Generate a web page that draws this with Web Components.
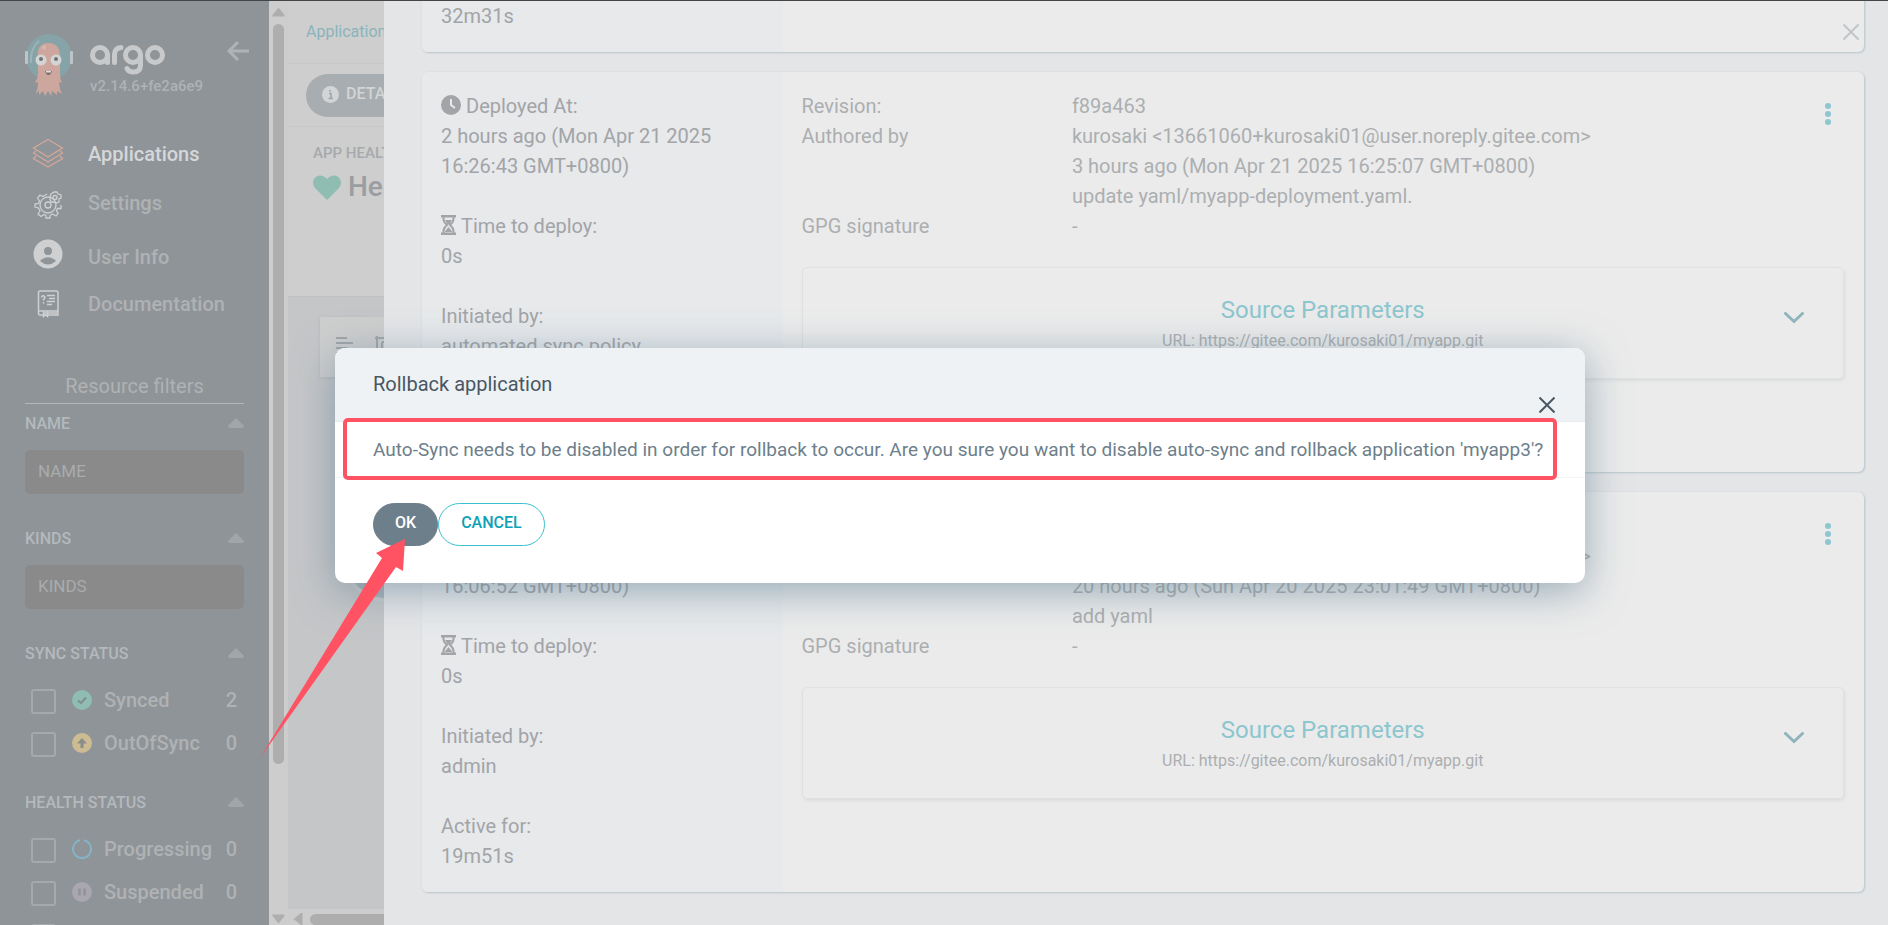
<!DOCTYPE html>
<html lang="en">
<head>
<meta charset="utf-8">
<title>Argo CD - Rollback application</title>
<style>
html, body { margin: 0; height: 100%; overflow: hidden; }
body { font-family: Roboto, "Liberation Sans", sans-serif; font-size: 20px; line-height: 30px; background: #c5c6c8; }
</style>
</head>
<body>
<argo-app></argo-app>

<template id="t-argo-app">
<style>
:host { display: flex; height: 100vh; box-sizing: border-box; border-top: 1px solid #444548; position: relative; overflow: hidden; }
argo-sidebar { flex: 0 0 269px; }
argo-scrollbar { flex: 0 0 19px; }
argo-page { flex: 0 0 96px; }
argo-panel { flex: 1; min-width: 0; }
argo-modal { position: absolute; left: 335px; right: 303px; top: 347px; }
.arrow { position: absolute; left: 255px; top: 534px; }
</style>
<argo-sidebar></argo-sidebar>
<argo-scrollbar></argo-scrollbar>
<argo-page></argo-page>
<argo-panel></argo-panel>
<argo-modal></argo-modal>
<svg class="arrow" width="160" height="228" viewBox="255 535 160 228" aria-hidden="true"><path d="M405 539L376 553L382 558L260 758L396 567L403 571Z" fill="#ff5363"/></svg>
</template>

<template id="t-argo-sidebar">
<style>
:host { display: block; background: #8f9498; color: #afb2b4; padding: 32px 25px 0; box-sizing: border-box; overflow: hidden; }
header { display: flex; height: 64px; }
.logo { flex: 0 0 49px; }
.brand { flex: 1; padding: 12px 0 0 16px; }
.brand svg { display: block; }
.version { font-size: 15px; line-height: 20px; font-weight: 500; }
button { background: none; border: 0; padding: 0; height: 36px; margin-right: -6px; }
nav { padding: 32px 0 0 7px; display: flex; flex-direction: column; }
nav a { display: flex; align-items: center; gap: 24px; height: 48px; color: inherit; text-decoration: none; font-size: 20px; font-weight: 500; }
nav a svg { flex: 0 0 32px; }
nav a.on { color: #d6d7d8; height: 50px; }
nav a.user { height: 56px; }
nav a.doc { height: 42px; }
nav a.user span { padding-top: 4px; }
h2 { margin: 44px 0 0; font-size: 20px; font-weight: 400; line-height: 34px; border-bottom: 1px solid #b3b7b9; text-align: center; }
</style>
<header>
<svg class="logo" width="49" height="64" viewBox="25 33 49 64" aria-hidden="true">
<circle cx="49" cy="57" r="23" fill="#86a3a8"/><path d="M31 63Q30 48 39 41" fill="none" stroke="#9db3b7" stroke-width="2"/>
<rect x="25" y="51" width="3" height="13" rx="1" fill="#bfc4ca"/><rect x="70" y="51" width="3" height="13" rx="1" fill="#bfc4ca"/>
<path d="M37.500 55Q38 43 48.500 43T60 55V73Q60 79 62 83L59 82Q60 91 62 94L57 91V95L52 91L51 96L48 91L45 96L43 91L39 95V91L35 94Q38 90 38 82L35 83Q38 78 38 73Z" fill="#cda79d"/>
<circle cx="44" cy="47.500" r="2" fill="#d9b9ae"/><circle cx="41" cy="60" r="5.500" fill="#d4d4d4"/><circle cx="56" cy="60" r="5.500" fill="#d4d4d4"/>
<circle cx="41" cy="59" r="2" fill="#6d7377"/><circle cx="56" cy="59" r="2" fill="#6d7377"/><path d="M45 71H52Q51 75 48.500 75T45 71Z" fill="#7d6e6e"/><path d="M46 71H51V72.500H46Z" fill="#ddd"/>
</svg>
<div class="brand">
<svg width="76" height="31" viewBox="90 45 76 31" role="img" aria-label="argo"><g fill="none" stroke="#c8c9ca" stroke-width="5" stroke-linecap="round"><circle cx="100" cy="55" r="7.500"/><path d="M107.500 55V62.500M114.500 62.500V54Q115 48 121 47.500"/><circle cx="133" cy="55" r="7.500"/><path d="M140.500 55V66Q140 72 133.500 72Q128.500 72 127 68.500"/><circle cx="155" cy="55" r="7.500"/></g></svg>
<div class="version">v2.14.6+fe2a6e9</div>
</div>
<button aria-label="Collapse sidebar"><svg width="24" height="36" viewBox="226 33 24 36"><path d="M249 51H229M238 42L229 51L238 60" fill="none" stroke="#b0b3b5" stroke-width="3"/></svg></button>
</header>
<nav>
<a class="on" href="#apps"><svg width="32" height="32" viewBox="32 138 32 32" fill="none" stroke="#d3a799" stroke-width="1.300"><path d="M48 139.500L62.500 148L48 157L33.500 148ZM36 151L33.500 153L48 162L62.500 153L60 151M36 156L33.500 158.500L48 167L62.500 158.500L60 156"/></svg><span>Applications</span></a>
<a href="#settings"><svg width="32" height="32" viewBox="0 0 32 32" fill="none" stroke="#cfd0d1" stroke-width="1.300"><circle cx="16" cy="18" r="8"/><circle cx="16" cy="18" r="3"/><path d="M15 7L11 9.500L8 8L5.500 11L7.500 14L6.500 16.500L3 17V20L6.500 21L8 24L6 27L9 29.500L12 27.500L14 28.500V31H18V28.500L20.500 27L24 29L26 26.500L24.500 23.500L25.500 21.500H29V18"/><circle cx="23" cy="10.500" r="2"/><path d="M22 5H25L26 7L29 8V11L27 12L27 15L24 16L22 15L19 15L18 12V10L19 7Z"/></svg><span>Settings</span></a>
<a class="user" href="#user"><svg width="32" height="32" viewBox="0 0 32 32"><circle cx="16" cy="15" r="14.500" fill="#cfd0d1"/><circle cx="16" cy="12" r="4" fill="#8f9498"/><path d="M8 22Q16 14.500 24 22Q16 29 8 22Z" fill="#8f9498"/></svg><span>User Info</span></a>
<a class="doc" href="#docs"><svg width="32" height="32" viewBox="0 0 32 32" fill="none" stroke="#cfd0d1" stroke-width="1.500"><path d="M8 3H24.500Q26 3 26 5V27H8Q6.500 27 6.500 25V5Q6.500 3 8 3ZM7 23H26M11 25H25M15 7.500H23M17 10.500H23M15 13.500H23M15 16.500H20M11.500 23V28.500L13.500 27L15.500 28.500V23"/><path d="M9.500 9.500Q10 7 12 8T11.500 11.500V12.500M11.500 14V15.500"/></svg><span>Documentation</span></a>
</nav>
<h2>Resource filters</h2>
<argo-filter name="NAME" kind="text"></argo-filter>
<argo-filter name="KINDS" kind="text"></argo-filter>
<argo-filter name="SYNC STATUS">
<argo-check label="Synced" count="2" icon="synced"></argo-check>
<argo-check label="OutOfSync" count="0" icon="out"></argo-check>
</argo-filter>
<argo-filter name="HEALTH STATUS">
<argo-check label="Progressing" count="0" icon="progress"></argo-check>
<argo-check label="Suspended" count="0" icon="suspended"></argo-check>
<argo-check label="Healthy" count="2" icon="healthy"></argo-check>
</argo-filter>
</template>

<template id="t-argo-filter">
<style>
:host { display: block; }
.head { display: flex; justify-content: space-between; align-items: center; height: 40px; font-size: 16px; font-weight: 500; }
.head span { color: #b3b9bc; }
.head svg { margin-bottom: 2px; }
input { display: block; width: 100%; height: 44px; box-sizing: border-box; border: 0; border-radius: 5px; background: #8a8a8a; padding: 0 13px 3px; font: 400 17px/40px Roboto, sans-serif; margin: 6px 0 25px; }
input::placeholder { color: #a9acae; opacity: 1; }
.items { padding: 4px 0 19px 6px; }
</style>
<div class="head"><span></span><svg width="16" height="10" viewBox="0 0 16 10" aria-hidden="true"><path d="M8 0L16 8Q16 10 14 10H2Q0 10 0 8Z" fill="#a2a6a8"/></svg></div>
<div class="body"></div>
</template>

<template id="t-argo-check">
<style>
:host { display: block; height: 43px; }
label { display: flex; align-items: center; height: 43px; font-size: 20px; font-weight: 500; }
input { appearance: none; width: 25px; height: 25px; border: 2px solid #a5a9ab; border-radius: 3px; margin: 4px 16px 0 0; flex: none; box-sizing: border-box; }
svg { flex: none; margin-right: 12px; }
.n { flex: 1; }
.c { margin-right: 7px; }
</style>
<label><input type="checkbox"><svg width="20" height="20" viewBox="0 0 20 20" aria-hidden="true"></svg><span class="n"></span><span class="c"></span></label>
</template>

<template id="t-argo-scrollbar">
<style>
:host { display: flex; flex-direction: column; align-items: center; background: #cdcdcd; padding: 6px 0 1px; box-sizing: border-box; }
.thumb { width: 11px; flex: 0 1 740px; border-radius: 6px; background: #aeaeae; margin-top: 7px; }
.gap { flex: 1; }
svg { flex: none; }
</style>
<svg width="13" height="10" viewBox="0 0 13 10"><path d="M6.500 0.500L12.500 8V9.500H0.500V8Z" fill="#aeaeae"/></svg>
<div class="thumb"></div><div class="gap"></div>
<svg width="13" height="10" viewBox="0 0 13 10"><path d="M6.500 9.500L12.500 2V0.500H0.500V2Z" fill="#aeaeae"/></svg>
</template>

<template id="t-argo-page">
<style>
:host { display: flex; flex-direction: column; background: #cecece; overflow: hidden; white-space: nowrap; }
svg { flex: none; }
.crumb { height: 63px; border-bottom: 1px solid #c7c8c9; box-sizing: border-box; padding: 15px 0 0 18px; font-size: 16px; line-height: 32px; flex: none; }
.crumb a { color: #8ab4bb; text-decoration: none; }
.actions { height: 63px; border-bottom: 1px solid #c7c8c9; box-sizing: border-box; padding: 10px 0 0 18px; flex: none; }
.actions button { display: flex; align-items: center; gap: 7px; height: 43px; width: 130px; border: 0; border-radius: 22px; background: #a7adb0; color: #d3d4d5; font: 500 16px/40px Roboto, sans-serif; padding: 0 0 3px 16px; }
.status { height: 169px; padding: 14px 0 0 25px; flex: none; box-sizing: border-box; color: #a6a9ab; }
.status .t { font-size: 15px; font-weight: 500; line-height: 24px; }
.status .v { display: flex; align-items: center; gap: 7px; font-size: 28px; font-weight: 500; line-height: 44px; color: #9a9ea2; }
.canvas { flex: 1; background: #c5c6c8; border-top: 1px solid #bfc1c2; padding: 20px 0 0 32px; position: relative; }
.tools { width: 90px; height: 60px; background: #cecece; padding: 19px 0 0 16px; box-sizing: border-box; box-shadow: 0 1px 3px #b5b8ba; }
.node { position: absolute; left: 54px; top: 217px; width: 88px; height: 88px; border-radius: 50%; background: #a9b3b9; border: 4px solid #cccdce; box-sizing: border-box; }
.hbar { flex: 0 0 16px; background: #cdcdcd; display: flex; align-items: center; gap: 7px; padding: 4px 0 0 5px; height: 16px; box-sizing: border-box; }
.hbar i { width: 200px; flex: none; height: 11px; border-radius: 6px 0 0 6px; background: #aeaeae; }
</style>
<div class="crumb"><a href="#apps">Applications</a></div>
<div class="actions"><button><svg width="17" height="17" viewBox="0 0 17 17"><circle cx="8.500" cy="8.500" r="8.500" fill="#d3d4d5"/><path d="M7 7.500H9V12M6.500 12.500H11M8 4V5.800" stroke="#a0a6a9" stroke-width="1.600" fill="none"/></svg>DETAILS</button></div>
<div class="status"><div class="t">APP HEALTH</div><div class="v"><svg width="28" height="25" viewBox="0 0 28 25"><path d="M14 25L2 13Q-1 9 0.500 5Q2.500 0.500 7 0.500Q11 0.500 14 4Q17 0.500 21 0.500Q25.500 0.500 27.500 5Q29 9 26 13Z" fill="#8fbdb1"/></svg>Healthy</div></div>
<div class="canvas"><div class="tools"><svg width="64" height="30" viewBox="0 0 64 30" fill="none" stroke="#a0a6aa" stroke-width="2"><path d="M0 2H11M0 7H17M0 12H11M0 17H17M41 0V30M39 2H64M46 6H64M46 6V26"/></svg></div><div class="node"></div></div>
<div class="hbar"><svg width="10" height="12" viewBox="0 0 10 12"><path d="M0.500 6L8 0H9.500V12H8Z" fill="#aeaeae"/></svg><i></i></div>
</template>

<template id="t-argo-panel">
<style>
:host { display: flex; flex-direction: column; gap: 20px; background: #e4e5e7; padding: 0 24px 0 38px; position: relative; overflow: hidden; }
argo-deploy { flex: none; }
argo-deploy:first-of-type { margin-top: -349px; }
.close { position: absolute; right: 29px; top: 23px; width: 16px; height: 16px; border: 0; background: none; padding: 0; }
.close svg { display: block; }
</style>
<argo-deploy at="3 hours ago (Mon Apr 21 2025|15:54:12 GMT+0800)" by="automated sync policy" active="32m31s" rev="f89a463" when="3 hours ago (Mon Apr 21 2025 15:50:07 GMT+0800)" msg="update yaml/myapp-deployment.yaml."></argo-deploy>
<argo-deploy at="2 hours ago (Mon Apr 21 2025|16:26:43 GMT+0800)" by="automated sync policy" active="2h10m" rev="f89a463" when="3 hours ago (Mon Apr 21 2025 16:25:07 GMT+0800)" msg="update yaml/myapp-deployment.yaml."></argo-deploy>
<argo-deploy at="3 hours ago (Mon Apr 21 2025|16:06:52 GMT+0800)" by="admin" active="19m51s" rev="f89a463" when="20 hours ago (Sun Apr 20 2025 23:01:49 GMT+0800)" msg="add yaml"></argo-deploy>
<button class="close" aria-label="Close panel"><svg width="16" height="16" viewBox="0 0 16 16"><path d="M0.500 0.500L15.500 15.500M15.500 0.500L0.500 15.500" stroke="#c0c6ca" stroke-width="2"/></svg></button>
</template>

<template id="t-argo-deploy">
<style>
:host { display: grid; grid-template-columns: 1fr 3fr; height: 400px; border-radius: 6px; background: #ebebeb; box-shadow: 1px 1px 2px #b9c6cc, 0 0 2px #d3d9dc; overflow: hidden; position: relative; }
.left { background: #e7e9eb; color: #a2a4a8; padding: 19px; }
.left p { margin: 0 0 30px; }
.left svg { vertical-align: -2px; margin-right: 5px; }
.right { color: #abafb1; padding-top: 19px; }
.row { display: grid; grid-template-columns: 1fr 3fr; }
.row > span { padding-left: 19px; }
.src { margin: 26px 20px 0 19px; height: 112px; box-sizing: border-box; border: 1px solid #dfe0e0; border-radius: 5px; box-shadow: 1px 2px 3px #dcdddd; text-align: center; padding-top: 26px; position: relative; }
.src h3 { margin: 0; font-size: 24px; font-weight: 400; line-height: 32px; color: #8cc6ce; }
.src div { font-size: 16px; line-height: 30px; }
.src button, .kebab { position: absolute; border: 0; background: none; padding: 0; display: block; }
.src button { right: 39px; top: 44px; }
.kebab { right: 33px; top: 31px; }
button svg { display: block; }
</style>
<div class="left">
<p><svg width="20" height="20" viewBox="0 0 20 20"><circle cx="10" cy="10" r="10" fill="#a2a4a8"/><path d="M10 4V10L14 13" stroke="#e7e9eb" stroke-width="2" fill="none"/></svg>Deployed At:<br><span class="at1"></span><br><span class="at2"></span></p>
<p><svg width="15" height="20" viewBox="0 0 15 20"><path d="M0 0H15V2.500H0ZM0 17.500H15V20H0Z" fill="#a2a4a8"/><path d="M2.500 1V4Q2.500 7 6 10Q2.500 13 2.500 16V19M12.500 1V4Q12.500 7 9 10Q12.500 13 12.500 16V19" fill="none" stroke="#a2a4a8" stroke-width="2"/><path d="M4 5H11L8.500 9.500H6.500ZM3.500 17L7.500 12L11.500 17Z" fill="#a2a4a8"/></svg>Time to deploy:<br>0s</p>
<p>Initiated by:<br><span class="by"></span></p>
<p>Active for:<br><span class="active"></span></p>
</div>
<div class="right">
<div class="row"><span>Revision:</span><span class="rev"></span></div>
<div class="row"><span>Authored by</span><span>kurosaki &lt;13661060+kurosaki01@user.noreply.gitee.com&gt;<br><span class="when"></span><br><span class="msg"></span></span></div>
<div class="row"><span>GPG signature</span><span>-</span></div>
<div class="src"><h3>Source Parameters</h3><div>URL: https://gitee.com/kurosaki01/myapp.git</div>
<button aria-label="Expand"><svg width="20" height="12" viewBox="0 0 20 12"><path d="M1.500 1.500L10 9.500L18.500 1.500" fill="none" stroke="#8fb4be" stroke-width="3" stroke-linecap="round"/></svg></button></div>
</div>
<button class="kebab" aria-label="Actions"><svg width="6" height="22" viewBox="0 0 6 22" fill="#8cc6ce"><circle cx="3" cy="3" r="3"/><circle cx="3" cy="11" r="3"/><circle cx="3" cy="19" r="3"/></svg></button>
</template>

<template id="t-argo-modal">
<style>
:host { display: block; background: #fff; border-radius: 10px; box-shadow: 0 8px 40px rgba(96, 128, 146, .6); }
header { height: 74px; border-bottom: 1px solid #e9eced; box-sizing: border-box; background: #eef2f5; border-radius: 10px 10px 0 0; position: relative; padding: 21px 38px 0; }
h1 { margin: 0; font-size: 20px; line-height: 30px; font-weight: 400; color: #495763; }
header button { position: absolute; right: 30px; top: 49px; border: 0; background: none; padding: 0; }
header svg { display: block; }
.msg { padding: 0 38px; height: 56px; font-size: 19px; line-height: 56px; box-sizing: border-box; border-bottom: 1px solid #f3f4f5; color: #6d7f8b; position: relative; white-space: nowrap; }
.mark { position: absolute; left: 8px; right: 28px; top: -4px; bottom: -3px; border: 4px solid #ff5363; border-radius: 5px; box-sizing: border-box; }
footer { display: flex; padding: 25px 38px 37px; }
footer button { height: 43px; border: 1px solid #6d7f8b; border-radius: 22px; background: #6d7f8b; color: #fff; font: 500 16px/38px Roboto, sans-serif; padding: 0 21px 3px; }
footer button.alt { background: #fff; border-color: #3cc0cf; color: #0da2b6; padding: 0 22px 3px; }
</style>
<header><h1>Rollback application</h1><button aria-label="Close"><svg width="16" height="16" viewBox="0 0 16 16"><path d="M0.500 0.500L15.500 15.500M15.500 0.500L0.500 15.500" stroke="#495763" stroke-width="2"/></svg></button></header>
<div class="msg">Auto-Sync needs to be disabled in order for rollback to occur. Are you sure you want to disable auto-sync and rollback application 'myapp3'?<div class="mark"></div></div>
<footer><button>OK</button><button class="alt">CANCEL</button></footer>
</template>

<script>
class Base extends HTMLElement {
  constructor() {
    super();
    this.attachShadow({ mode: 'open' }).append(document.getElementById('t-' + this.localName).content.cloneNode(true));
  }
  $(s) { return this.shadowRoot.querySelector(s); }
}
for (const n of ['app', 'sidebar', 'scrollbar', 'page', 'panel', 'modal']) customElements.define('argo-' + n, class extends Base {});

customElements.define('argo-filter', class extends Base {
  connectedCallback() {
    const name = this.getAttribute('name');
    this.$('.head span').textContent = name;
    const body = this.$('.body');
    body.replaceChildren();
    if (this.getAttribute('kind') === 'text') {
      const i = document.createElement('input');
      i.placeholder = name;
      i.setAttribute('aria-label', name);
      body.append(i);
    } else {
      body.className = 'items';
      body.append(document.createElement('slot'));
    }
  }
});

const ICONS = {
  synced: '<circle cx="10" cy="10" r="10" fill="#8fbdb1"/><path d="M6 10.500L9 13L14 7.500" fill="none" stroke="#838c8e" stroke-width="2"/>',
  out: '<circle cx="10" cy="10" r="10" fill="#cdbc92"/><path d="M10 5L15 10.500H11.500V15H8.500V10.500H5Z" fill="#8a8d8c"/>',
  progress: '<path d="M12 1.300A9 9 0 1 1 8 1.300" fill="none" stroke="#84b3c6" stroke-width="2"/>',
  suspended: '<circle cx="10" cy="10" r="10" fill="#aaa6b0"/><path d="M7.500 6.500V13.500M12.500 6.500V13.500" stroke="#8f9498" stroke-width="2.500"/>',
  healthy: '<path d="M10 19L1 10Q-1 4 5 2Q8 2 10 5Q12 2 15 2Q21 4 19 10Z" fill="#8fbdb1"/>'
};
customElements.define('argo-check', class extends Base {
  connectedCallback() {
    this.$('.n').textContent = this.getAttribute('label');
    this.$('.c').textContent = this.getAttribute('count');
    this.$('svg').innerHTML = ICONS[this.getAttribute('icon')];
  }
});
customElements.define('argo-deploy', class extends Base {
  connectedCallback() {
    const [a, b] = this.getAttribute('at').split('|');
    this.$('.at1').textContent = a;
    this.$('.at2').textContent = b;
    for (const k of ['by', 'active', 'rev', 'when', 'msg']) this.$('.' + k).textContent = this.getAttribute(k);
  }
});
</script>
</body>
</html>
